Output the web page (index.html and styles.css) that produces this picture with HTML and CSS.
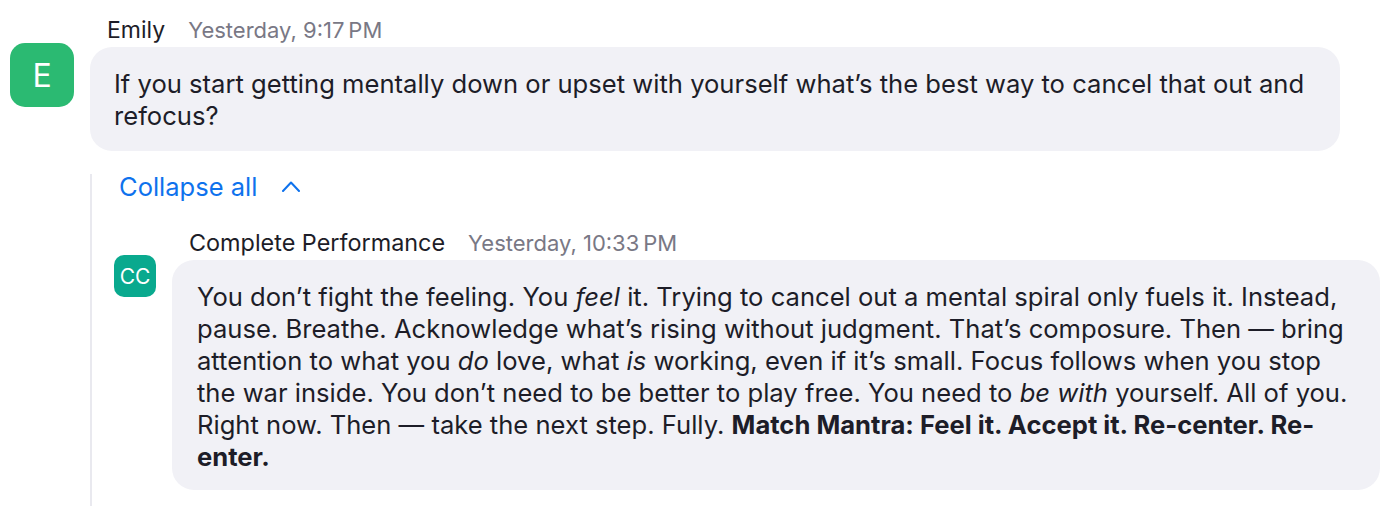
FILE: index.html
```html
<!DOCTYPE html>
<html lang="en">
    <head>
        <meta charset="UTF-8">
        <title>Thread</title>
        <link rel="stylesheet" href="styles.css">
    </head>
    <body>
        <div class="chat">
            <div class="message">
                <div class="avatar avatar-big">E</div>
                <div class="content">
                    <div class="header">
                        <span class="name">Emily</span>
                        <span class="time">Yesterday, 9:17&#8239;PM</span>
                    </div>
                    <div class="bubble bubble-first">
                        If you start getting mentally down or upset with yourself what’s the best way to cancel that out and refocus?
                    </div>
                </div>
            </div>

            <div class="thread">
                <div class="collapse">
                    <span>Collapse all</span>
                    <svg class="chevron" width="20" height="12" viewBox="0 0 20 12">
                        <path d="M2 11 L10 2.5 L18 11" fill="none" stroke="#0e72ed" stroke-width="2" stroke-linecap="round" stroke-linejoin="round"/>
                    </svg>
                </div>

                <div class="message reply">
                    <div class="avatar avatar-small">CC</div>
                    <div class="content">
                        <div class="header">
                            <span class="name name-long">Complete Performance</span>
                            <span class="time">Yesterday, 10:33&#8239;PM</span>
                        </div>
                        <div class="bubble">
                            You don’t fight the feeling. You <em>feel</em> it. Trying to cancel out a mental spiral only fuels it. Instead, pause. Breathe. Acknowledge what’s rising without judgment. That’s composure. Then — bring attention to what you <em>do</em> love, what <em>is</em> working, even if it’s small. Focus follows when you stop the war inside. You don’t need to be better to play free. You need to <em>be with</em> yourself. All of you. Right now. Then — take the next step. Fully. <strong>Match Mantra: Feel it. Accept it. Re-center. Re-enter.</strong>
                        </div>
                    </div>
                </div>
            </div>
        </div>
    </body>
</html>
```

FILE: styles.css
```css
html {
    background-color: #ffffff;
}

body {
    margin: 0;
    font-family: Inter, "Noto Sans", sans-serif;
    color: #1d1d28;
}

.chat {
    padding: 18px 20px 0 10px;
}

.message {
    display: flex;
    gap: 16px;
}

.avatar {
    flex: none;
    display: flex;
    align-items: center;
    justify-content: center;
    color: white;
}

.avatar-big {
    width: 64px;
    height: 64px;
    margin-top: 25px;
    border-radius: 15px;
    background-color: #2bba72;
    font-size: 32px;
}

.avatar-small {
    width: 42px;
    height: 42px;
    margin-top: 24px;
    border-radius: 10px;
    background-color: #09a98e;
    font-size: 21px;
}

.content {
    flex: 1;
}

.header {
    display: flex;
    align-items: baseline;
    gap: 23px;
    padding-left: 17px;
    height: 24px;
    margin-bottom: 5px;
    font-size: 23px;
    line-height: 24px;
}

.name-long {
    font-size: 23.4px;
}

.time {
    color: #797885;
    font-size: 22px;
}

.bubble {
    background-color: #f1f1f6;
    border-radius: 22px;
    padding: 21px 24px 19px 24px;
    font-size: 25.6px;
    line-height: 32px;
}

.bubble-first {
    width: 1202px;
}

.thread {
    margin: 23px 0 0 80px;
    border-left: 2px solid #e9e9ef;
    padding: 0 0 16px 22px;
}

.collapse {
    display: flex;
    align-items: center;
    gap: 24px;
    height: 24px;
    padding-left: 5px;
    color: #0e72ed;
    font-size: 25.5px;
}

.reply {
    margin-top: 33px;
}

.reply .bubble {
    padding-left: 25px;
    padding-bottom: 17px;
}
```
